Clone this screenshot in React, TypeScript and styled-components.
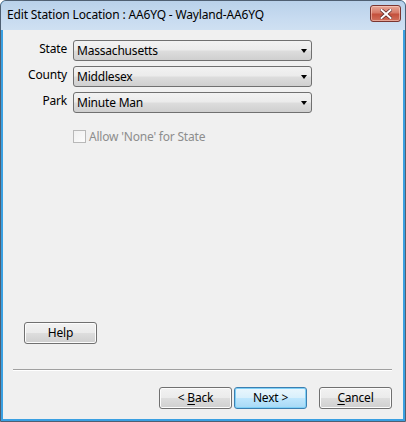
import React from "react";
import styled, { createGlobalStyle } from "styled-components";

const Global = createGlobalStyle`
  html, body { margin: 0; padding: 0; background: #ffffff; }
  * { box-sizing: border-box; }
`;

const Window = styled.div`
  width: 406px;
  height: 422px;
  display: flex;
  flex-direction: column;
  border: 1px solid #4f5f72;
  border-radius: 6px 6px 0 0;
  background: #3aa0e2;
  font-family: "Noto Sans", "Open Sans", sans-serif;
  font-size: 12px;
  color: #000;
  overflow: hidden;
`;

const TitleBar = styled.div`
  height: 29px;
  flex: none;
  display: flex;
  align-items: flex-start;
  background: linear-gradient(#b9d1ea, #c7dbf0 60%, #cfe0f2);
`;

const TitleText = styled.div`
  padding: 6px 0 0 6px;
  font-size: 12px;
  line-height: 16px;
  letter-spacing: -0.15px;
  color: #000;
`;

const CloseButton = styled.div`
  margin: 4px 4px 0 auto;
  width: 31px;
  height: 17px;
  border: 1px solid #7a3530;
  border-radius: 3px;
  background: linear-gradient(#e8a898, #d67a68 45%, #c4503c 55%, #d0705c);
  box-shadow: inset 0 0 0 1px rgba(255, 220, 210, 0.5);
  display: flex;
  align-items: center;
  justify-content: center;
`;

const Client = styled.div`
  flex: 1;
  margin: 0 2px 2px 2px;
  background: #f0f0f0;
  display: flex;
  flex-direction: column;
  padding: 10px 11px 10px 10px;
`;

const Form = styled.div`
  display: grid;
  grid-template-columns: 54px 239px;
  column-gap: 6px;
  row-gap: 5px;
`;

const Label = styled.div`
  text-align: right;
  line-height: 18px;
  letter-spacing: -0.2px;
`;

const Combo = styled.div`
  position: relative;
  height: 21px;
  border: 1px solid #707070;
  border-radius: 3px;
  background: linear-gradient(#f2f2f2, #ebebeb 48%, #dddddd 52%, #cfcfcf);
  padding-left: 3px;
  line-height: 19px;
  letter-spacing: -0.2px;
  &::after {
    content: "";
    position: absolute;
    right: 4px;
    top: 8px;
    border-left: 3.5px solid transparent;
    border-right: 3.5px solid transparent;
    border-top: 4px solid #000;
  }
`;

const CheckRow = styled.label`
  margin: 17px 0 0 60px;
  display: flex;
  align-items: center;
  gap: 3px;
  color: #8d8d8d;
  letter-spacing: -0.2px;
  line-height: 13px;
`;

const Box = styled.span`
  width: 13px;
  height: 13px;
  border: 1px solid #b8b8b8;
  background: linear-gradient(135deg, #f0f0f0, #fcfcfc);
`;

const Spacer = styled.div`
  flex: 1;
`;

const Button = styled.div<{ $default?: boolean }>`
  width: 73px;
  height: 22px;
  border: 1px solid ${(p) => (p.$default ? "#3c7fb1" : "#707070")};
  border-radius: 3px;
  background: ${(p) =>
    p.$default
      ? "linear-gradient(#eaf6fd, #d9f0fc 48%, #bee6fd 52%, #a7d9f5)"
      : "linear-gradient(#f2f2f2, #ebebeb 48%, #dddddd 52%, #cfcfcf)"};
  box-shadow: ${(p) =>
    p.$default ? "inset 0 0 0 1px #7fd0f6" : "inset 0 0 0 1px #fcfcfc"};
  display: flex;
  align-items: center;
  justify-content: center;
  letter-spacing: -0.2px;
  line-height: 16px;
  u { text-decoration: underline; text-underline-offset: 2px; }
`;

const HelpRow = styled.div`
  padding-left: 11px;
`;

const Separator = styled.div`
  margin-top: 25px;
  height: 2px;
  border-top: 1px solid #a0a0a0;
  border-bottom: 1px solid #ffffff;
`;

const ButtonRow = styled.div`
  margin-top: 16px;
  display: flex;
  justify-content: flex-end;
  gap: 2px;
`;

const CancelWrap = styled.div`
  margin-left: 10px;
`;

export default function App() {
  return (
    <>
      <Global />
      <Window>
        <TitleBar>
          <TitleText>Edit Station Location : AA6YQ - Wayland-AA6YQ</TitleText>
          <CloseButton>
            <svg width="12" height="10" viewBox="0 0 12 10">
              <path
                d="M1.5 1 L10.5 9 M10.5 1 L1.5 9"
                stroke="#5a2a28"
                strokeWidth="3.4"
                strokeLinecap="square"
              />
              <path
                d="M1.5 1 L10.5 9 M10.5 1 L1.5 9"
                stroke="#ffffff"
                strokeWidth="2"
                strokeLinecap="square"
              />
            </svg>
          </CloseButton>
        </TitleBar>
        <Client>
          <Form>
            <Label>State</Label>
            <Combo>Massachusetts</Combo>
            <Label>County</Label>
            <Combo>Middlesex</Combo>
            <Label>Park</Label>
            <Combo>Minute Man</Combo>
          </Form>
          <CheckRow>
            <Box />
            Allow 'None' for State
          </CheckRow>
          <Spacer />
          <HelpRow>
            <Button>Help</Button>
          </HelpRow>
          <Separator />
          <ButtonRow>
            <Button>
              &lt;&nbsp;<u>B</u>ack
            </Button>
            <Button $default>Next &gt;</Button>
            <CancelWrap>
              <Button>
                <u>C</u>ancel
              </Button>
            </CancelWrap>
          </ButtonRow>
        </Client>
      </Window>
    </>
  );
}
